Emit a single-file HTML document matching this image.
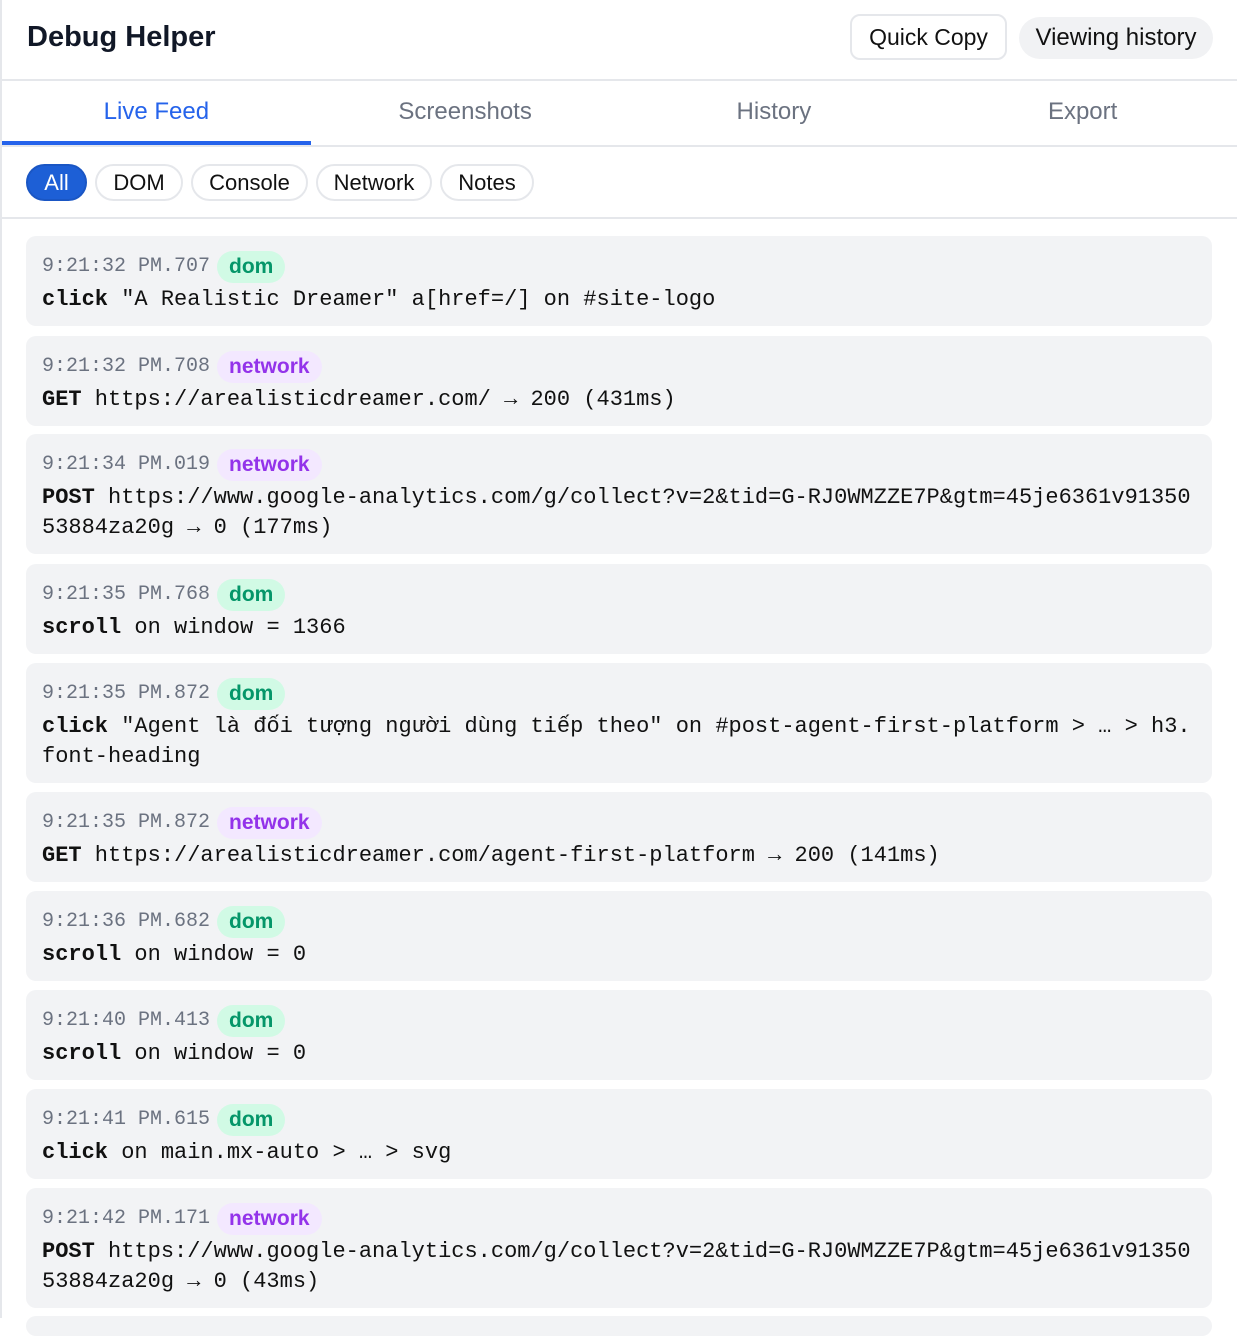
<!DOCTYPE html>
<html><head><meta charset="utf-8"><style>
*{box-sizing:border-box;margin:0;padding:0}
body{width:1254px;height:1318px;background:#fff;font-family:"Liberation Sans",sans-serif;overflow:hidden;position:relative}
.wrap{position:absolute;left:0;top:0;width:1237px;height:1318px;border-left:2px solid #e5e7eb}
.hdr{height:81px;border-bottom:2px solid #e5e7eb;position:relative}
.title{position:absolute;left:25px;top:21px;font-size:29px;font-weight:bold;color:#111827}
.qc{position:absolute;left:848px;top:14px;width:157px;height:46px;border:2px solid #e5e7eb;border-radius:10px;font-size:23px;color:#111;text-align:center;line-height:42px}
.vh{position:absolute;left:1017px;top:17px;width:194px;height:42px;background:#f1f2f4;border-radius:21px;font-size:24px;color:#111;text-align:center;line-height:42px}
.tabs{height:66px;border-bottom:2px solid #e5e7eb;display:flex;position:relative}
.tab{width:309px;text-align:center;font-size:24px;color:#6b7280;line-height:62px}
.tab.a{color:#2563eb;border-bottom:4px solid #2563eb;height:64px}
.filt{height:72px;border-bottom:2px solid #e5e7eb;position:relative}
.p{position:absolute;top:17px;height:37px;border:2px solid #e5e7eb;border-radius:19px;font-size:22px;color:#111;line-height:33px;text-align:center}
.p.a{background:#1d5fd6;border-color:#1a56c4;color:#fff}
.card{position:absolute;left:24px;width:1186px;background:#f2f3f5;border-radius:10px;padding:15px 16px 0 16px}
.ts{font-family:"Liberation Mono",monospace;font-size:20px;color:#6b7280;height:32px;line-height:32px;display:flex;align-items:center}
.b{display:inline-block;height:32px;line-height:32px;border-radius:16px;padding:0 12px;font-family:"Liberation Sans",sans-serif;font-weight:bold;font-size:21px;margin-left:7px}
.dom{background:#d1fae5;color:#059669}
.net{background:#f3e8ff;color:#9333ea}
.m{font-family:"Liberation Mono","DejaVu Sans Mono",monospace;font-size:22px;line-height:30px;color:#111;white-space:pre;margin-top:2px}
.m b{font-weight:bold}
</style></head><body><div class="wrap">
<div class="hdr"><div class="title">Debug Helper</div><div class="qc">Quick Copy</div><div class="vh">Viewing history</div></div>
<div class="tabs"><div class="tab a">Live Feed</div><div class="tab">Screenshots</div><div class="tab">History</div><div class="tab">Export</div></div>
<div class="filt">
<div class="p a" style="left:24px;width:61px">All</div>
<div class="p" style="left:93px;width:88px">DOM</div>
<div class="p" style="left:189px;width:117px">Console</div>
<div class="p" style="left:314px;width:116px">Network</div>
<div class="p" style="left:438px;width:94px">Notes</div>
</div>
<div class="card" style="top:236px;height:90px"><div class="ts">9:21:32 PM.707<span class="b dom">dom</span></div><div class="m"><b>click</b> "A Realistic Dreamer" a[href=/] on #site-logo</div></div>
<div class="card" style="top:336px;height:90px"><div class="ts">9:21:32 PM.708<span class="b net">network</span></div><div class="m"><b>GET</b> https://arealisticdreamer.com/ → 200 (431ms)</div></div>
<div class="card" style="top:434px;height:120px"><div class="ts">9:21:34 PM.019<span class="b net">network</span></div><div class="m"><b>POST</b> https://www.google-analytics.com/g/collect?v=2&amp;tid=G-RJ0WMZZE7P&amp;gtm=45je6361v91350
53884za20g → 0 (177ms)</div></div>
<div class="card" style="top:564px;height:90px"><div class="ts">9:21:35 PM.768<span class="b dom">dom</span></div><div class="m"><b>scroll</b> on window = 1366</div></div>
<div class="card" style="top:663px;height:120px"><div class="ts">9:21:35 PM.872<span class="b dom">dom</span></div><div class="m"><b>click</b> "Agent là đối tượng người dùng tiếp theo" on #post-agent-first-platform &gt; … &gt; h3.
font-heading</div></div>
<div class="card" style="top:792px;height:90px"><div class="ts">9:21:35 PM.872<span class="b net">network</span></div><div class="m"><b>GET</b> https://arealisticdreamer.com/agent-first-platform → 200 (141ms)</div></div>
<div class="card" style="top:891px;height:90px"><div class="ts">9:21:36 PM.682<span class="b dom">dom</span></div><div class="m"><b>scroll</b> on window = 0</div></div>
<div class="card" style="top:990px;height:90px"><div class="ts">9:21:40 PM.413<span class="b dom">dom</span></div><div class="m"><b>scroll</b> on window = 0</div></div>
<div class="card" style="top:1089px;height:90px"><div class="ts">9:21:41 PM.615<span class="b dom">dom</span></div><div class="m"><b>click</b> on main.mx-auto &gt; … &gt; svg</div></div>
<div class="card" style="top:1188px;height:120px"><div class="ts">9:21:42 PM.171<span class="b net">network</span></div><div class="m"><b>POST</b> https://www.google-analytics.com/g/collect?v=2&amp;tid=G-RJ0WMZZE7P&amp;gtm=45je6361v91350
53884za20g → 0 (43ms)</div></div>
<div class="card" style="top:1316px;height:20px"></div>
</div></body></html>
